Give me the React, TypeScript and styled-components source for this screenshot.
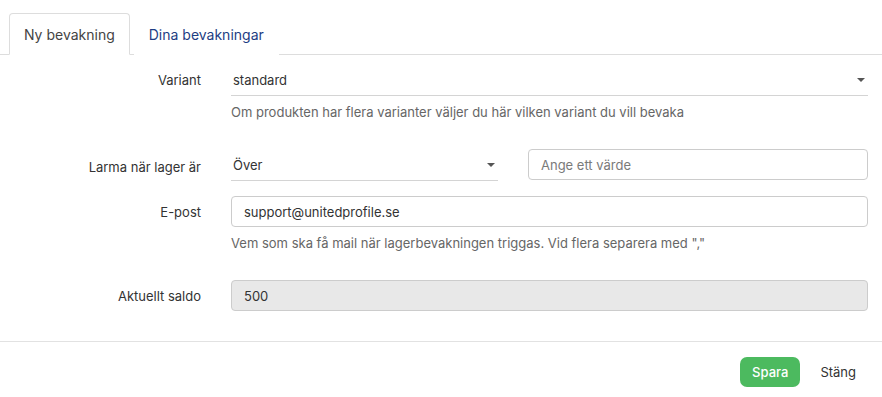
import React from "react";
import styled, { createGlobalStyle } from "styled-components";

const Global = createGlobalStyle`
  body {
    margin: 0;
    background: #fff;
    font-family: Inter, "Noto Sans", sans-serif;
    color: #333;
  }
`;

const Tabs = styled.nav`
  display: flex;
  padding: 13px 0 0 9px;
  border-bottom: 1px solid #ddd;
`;

const Tab = styled.div<{ $active?: boolean }>`
  height: 40px;
  display: flex;
  align-items: center;
  padding: 0 14px;
  margin-bottom: -1px;
  font-size: 14px;
  border: 1px solid ${(p) => (p.$active ? "#ddd" : "transparent")};
  border-bottom-color: ${(p) => (p.$active ? "#fff" : "transparent")};
  border-radius: 4px 4px 0 0;
  background: #fff;
  color: ${(p) => (p.$active ? "#444" : "#1d3d83")};
  margin-right: 4px;
`;

const Form = styled.div`
  padding: 9px 14px 0 0;
  display: flex;
  flex-direction: column;
`;

const Group = styled.div<{ $gap: number }>`
  display: grid;
  grid-template-columns: 201px 1fr;
  column-gap: 30px;
  margin-bottom: ${(p) => p.$gap}px;
`;

const Label = styled.label<{ $offset?: number }>`
  font-size: 13px;
  text-align: right;
  color: #333;
  height: 31px;
  display: flex;
  align-items: center;
  justify-content: flex-end;
  padding-top: ${(p) => p.$offset || 0}px;
  box-sizing: border-box;
`;

const Field = styled.div`
  display: flex;
  flex-direction: column;
`;

const Split = styled.div`
  display: grid;
  grid-template-columns: 267px 1fr;
  column-gap: 30px;
`;

const Select = styled.div`
  height: 31px;
  border-bottom: 1px solid #d4d4d4;
  display: flex;
  align-items: center;
  justify-content: space-between;
  padding: 0 3px 0 2px;
  font-size: 13px;
  color: #333;
`;

const Caret = styled.span`
  width: 0;
  height: 0;
  border-left: 4px solid transparent;
  border-right: 4px solid transparent;
  border-top: 4px solid #555;
`;

const Input = styled.div<{ $disabled?: boolean; $placeholder?: boolean }>`
  height: 29px;
  box-sizing: content-box;
  border: 1px solid #ccc;
  border-radius: 4px;
  background: ${(p) => (p.$disabled ? "#e8e8e8" : "#fff")};
  color: ${(p) => (p.$placeholder ? "#7a7a7a" : "#333")};
  display: flex;
  align-items: center;
  padding: 0 12px;
  font-size: 13px;
`;

const Help = styled.div`
  font-size: 13px;
  color: #666;
  line-height: 18px;
  margin-top: 7px;
`;

const Footer = styled.div`
  border-top: 1px solid #e2e2e2;
  margin-top: 30px;
  padding: 15px 14px 0 0;
  display: flex;
  justify-content: flex-end;
  gap: 8px;
`;

const Button = styled.button<{ $primary?: boolean }>`
  height: 30px;
  border: none;
  border-radius: 7px;
  padding: 0 12px;
  font-family: Inter, "Noto Sans", sans-serif;
  font-size: 13px;
  background: ${(p) => (p.$primary ? "#4cba5f" : "transparent")};
  color: ${(p) => (p.$primary ? "#fff" : "#333")};
  font-weight: ${(p) => (p.$primary ? 500 : 400)};
`;

export default function App() {
  return (
    <>
      <Global />
      <Tabs>
        <Tab $active>Ny bevakning</Tab>
        <Tab>Dina bevakningar</Tab>
      </Tabs>
      <Form>
        <Group $gap={28}>
          <Label>Variant</Label>
          <Field>
            <Select>
              standard
              <Caret />
            </Select>
            <Help>Om produkten har flera varianter väljer du här vilken variant du vill bevaka</Help>
          </Field>
        </Group>
        <Group $gap={15}>
          <Label $offset={4}>Larma när lager är</Label>
          <Split>
            <Select>
              Över
              <Caret />
            </Select>
            <Input $placeholder>Ange ett värde</Input>
          </Split>
        </Group>
        <Group $gap={28}>
          <Label>E-post</Label>
          <Field>
            <Input>support@unitedprofile.se</Input>
            <Help>Vem som ska få mail när lagerbevakningen triggas. Vid flera separera med ","</Help>
          </Field>
        </Group>
        <Group $gap={0}>
          <Label>Aktuellt saldo</Label>
          <Input $disabled>500</Input>
        </Group>
      </Form>
      <Footer>
        <Button $primary>Spara</Button>
        <Button>Stäng</Button>
      </Footer>
    </>
  );
}
